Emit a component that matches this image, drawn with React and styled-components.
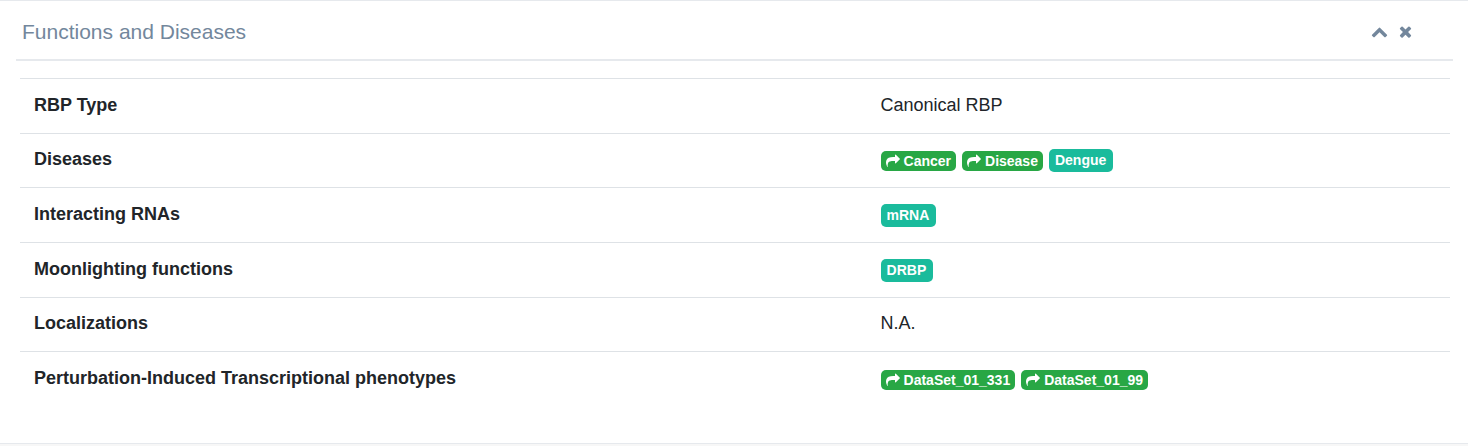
import React, { useState } from 'react';
import styled, { createGlobalStyle } from 'styled-components';

const GlobalStyle = createGlobalStyle`
  * {
    box-sizing: border-box;
  }

  body {
    margin: 0;
    background: #f7f7f7;
    color: #212529;
    font-family: "Liberation Sans", Arial, sans-serif;
    font-size: 18px;
    line-height: 26px;
  }
`;

const Panel = styled.section`
  padding: 0 15px 37px 16px;
  background: #fff;
  border-top: 1px solid #e6e9ed;
  border-bottom: 1px solid #e6e9ed;
`;

const PanelHeader = styled.header`
  display: flex;
  align-items: center;
  justify-content: space-between;
  height: 60px;
  padding: 3px 39px 0 6px;
  margin-bottom: 17px;
  border-bottom: 2px solid #e6e9ed;
  color: #73879c;
`;

const Title = styled.h2`
  margin: 0;
  font-size: 21px;
  font-weight: 400;
`;

const Toolbox = styled.div`
  display: flex;
  gap: 9px;
`;

const ToolButton = styled.button`
  display: flex;
  padding: 0;
  border: 0;
  background: none;
  color: inherit;
  cursor: pointer;
`;

const Icon = styled.svg`
  display: block;
  width: ${(props) => props.$size}px;
  height: ${(props) => props.$size}px;
  fill: currentColor;
`;

const TableWrap = styled.div`
  padding: 0 3px 0 4px;
`;

const Table = styled.table`
  width: 100%;
  height: 328px;
  table-layout: fixed;
  border-collapse: collapse;
`;

const HeadCell = styled.th`
  width: 59.2%;
  padding: 12px 14px 14px;
  border-top: 1px solid #dee2e6;
  text-align: left;
`;

const Cell = styled.td`
  padding: 12px 14px 14px;
  border-top: 1px solid #dee2e6;
`;

const Badges = styled.div`
  display: flex;
  align-items: center;
  gap: 6px;
  padding-top: 3px;
`;

const LinkBadge = styled.a`
  display: flex;
  align-items: center;
  gap: 4px;
  padding: 0 5px;
  border-radius: 5px;
  background: #28a745;
  color: #fff;
  font-size: 14px;
  font-weight: 700;
  line-height: 20px;
  text-decoration: none;
`;

const Badge = styled.span`
  padding: 0 7px 0 6px;
  border-radius: 5px;
  background: #1abb9c;
  color: #fff;
  font-size: 14px;
  font-weight: 700;
  line-height: 23px;
`;

const icons = {
  up: 'M1683 1331l-166 165q-19 19-45 19t-45-19l-531-531-531 531q-19 19-45 19t-45-19l-166-165q-19-19-19-45.500t19-45.500l742-741q19-19 45-19t45 19l742 741q19 19 19 45.500t-19 45.500z',
  close: 'M1490 1322q0 40-28 68l-136 136q-28 28-68 28t-68-28l-294-294-294 294q-28 28-68 28t-68-28l-136-136q-28-28-28-68t28-68l294-294-294-294q-28-28-28-68t28-68l136-136q28-28 68-28t68 28l294 294 294-294q28-28 68-28t68 28l136 136q28 28 28 68t-28 68l-294 294 294 294q28 28 28 68z',
  share: 'M1792 640q0 26-19 45l-512 512q-19 19-45 19t-45-19-19-45v-256h-224q-98 0-175.500 6t-154 21.500-133 42.500-105.500 69.500-80 101-48.500 138.500-17.500 181q0 55 5 123 0 6 2.500 23.500t2.500 26.500q0 15-8.500 25t-23.500 10q-16 0-28-17-7-9-13-22t-13.500-30-10.500-24q-127-285-127-451 0-199 53-333 162-403 875-403h224v-256q0-26 19-45t45-19 45 19l512 512q19 19 19 45z',
};

const rows = [
  { label: 'RBP Type', text: 'Canonical RBP' },
  { label: 'Diseases', links: ['Cancer', 'Disease'], tags: ['Dengue'] },
  { label: 'Interacting RNAs', tags: ['mRNA'] },
  { label: 'Moonlighting functions', tags: ['DRBP'] },
  { label: 'Localizations', text: 'N.A.' },
  {
    label: 'Perturbation-Induced Transcriptional phenotypes',
    links: ['DataSet_01_331', 'DataSet_01_99'],
  },
];

const FaIcon = ({ name, size }) => (
  <Icon viewBox="0 0 1792 1792" $size={size} aria-hidden="true">
    <path d={icons[name]} />
  </Icon>
);

const RowValue = ({ row }) => {
  if (row.text) return row.text;

  return (
    <Badges>
      {row.links?.map((link) => (
        <LinkBadge key={link} href={`#${link}`}>
          <FaIcon name="share" size={14} />
          {link}
        </LinkBadge>
      ))}
      {row.tags?.map((tag) => (
        <Badge key={tag}>{tag}</Badge>
      ))}
    </Badges>
  );
};

const App = () => {
  const [open, setOpen] = useState(true);
  const [closed, setClosed] = useState(false);

  return (
    <>
      <GlobalStyle />
      {!closed && (
        <Panel>
          <PanelHeader>
            <Title>Functions and Diseases</Title>
            <Toolbox>
              <ToolButton type="button" aria-label="Collapse" onClick={() => setOpen(!open)}>
                <FaIcon name="up" size={17} />
              </ToolButton>
              <ToolButton type="button" aria-label="Close" onClick={() => setClosed(true)}>
                <FaIcon name="close" size={17} />
              </ToolButton>
            </Toolbox>
          </PanelHeader>
          {open && (
            <TableWrap>
              <Table>
                <tbody>
                  {rows.map((row) => (
                    <tr key={row.label}>
                      <HeadCell scope="row">{row.label}</HeadCell>
                      <Cell>
                        <RowValue row={row} />
                      </Cell>
                    </tr>
                  ))}
                </tbody>
              </Table>
            </TableWrap>
          )}
        </Panel>
      )}
    </>
  );
};

export default App;
